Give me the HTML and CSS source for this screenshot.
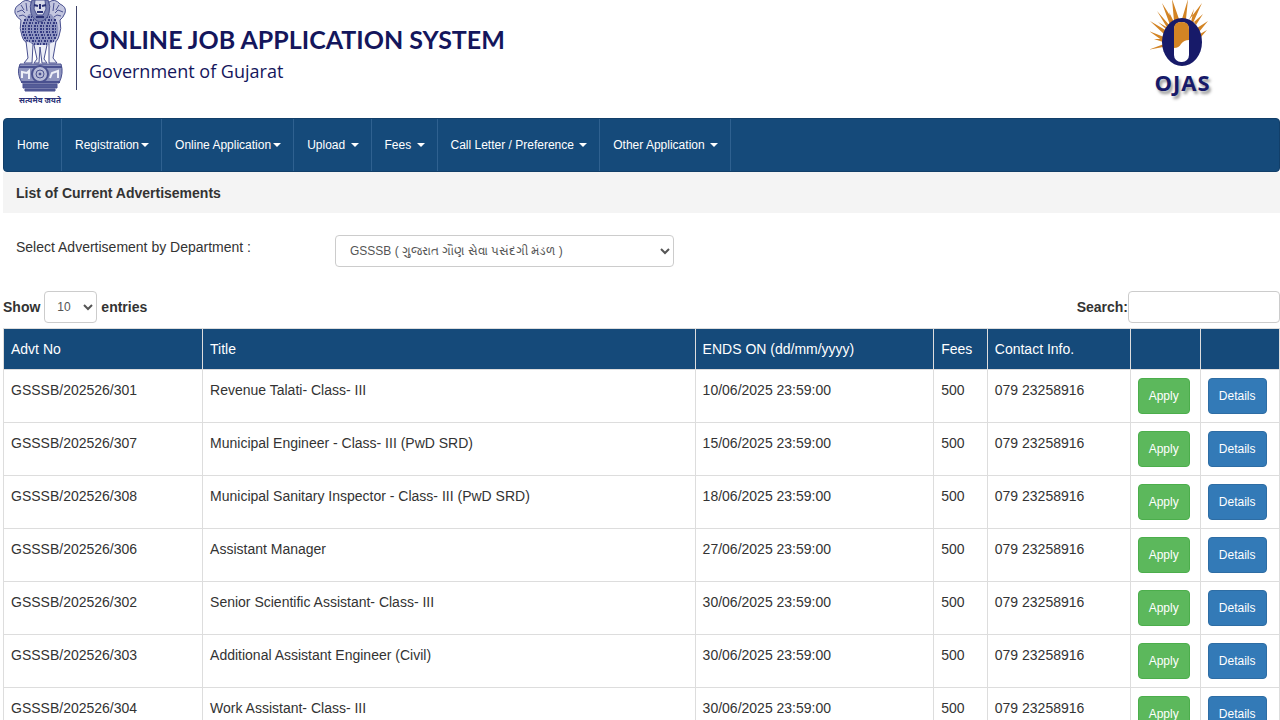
FILE: index.html
```html
<!DOCTYPE html>
<html lang="en">
<head>
    <meta charset="UTF-8">
    <meta name="viewport" content="width=device-width, initial-scale=1.0">
    <title>Online Job Application System</title>
    <link rel="stylesheet" href="styles.css">
</head>
<body>
    <header class="header">
        <div class="emblem">
            <svg width="52" height="94" viewBox="14 0 52 94" fill="none" stroke="#4a5190">
                <!-- side lions -->
                <path d="M31 2 Q25-2 20 4 Q14 7 15 13 Q17 18 21 20 Q19 29 22 36 Q24 43 29 43 L34 20Z" fill="#c3c6df"/>
                <path d="M49 2 Q55-2 60 4 Q67 7 65 13 Q63 18 60 20 Q62 29 59 36 Q57 43 52 43 L46 20Z" fill="#c3c6df"/>
                <path d="M17 12l5-2 3 3M19 16l4-1 3 2M21 5l3 5M26 3l1 8M63 12l-5-2-3 3M61 16l-4-1-3 2M59 5l-3 5M54 3l-1 8"/>
                <!-- manes -->
                <path d="M29 14 Q20 22 22 34 Q25 44 33 45 L40 48 L47 45 Q55 44 58 34 Q60 22 51 14Z" fill="#8f95c0" stroke="none"/>
                <path d="M28 17h24M24 20h32M23 23h34M22 26h36M22 29h36M22 32h36M23 35h34M24 38h32M26 41h28M31 44h18" stroke="#343b82" stroke-width="2" stroke-dasharray="2 1 1 2"/>
                <!-- centre lion -->
                <path d="M32 0 Q29 6 31 13 Q33 20 40 22 Q47 20 49 13 Q51 6 48 0Z" fill="#7b82b3"/>
                <path d="M35 0h10l1 9-3 6h-6l-3-6Z" fill="#d9dbea"/>
                <path d="M34 5l4 1M42 6l4-1M40 4v5M37 12h6M36 17h8" stroke="#2a3074" stroke-width="2"/>
                <!-- legs -->
                <path d="M26 41l2 17-4 5h8l1-19M34 45l3 14-3 4h5l1-16 2 16h5l-3-4 3-14M49 44v19h8l-4-5 3-17" fill="#eceef6"/>
                <!-- abacus and wheel -->
                <path d="M20 64h41q3 9-2 19H22q-6-10-2-19Z" fill="#8e94be"/>
                <path d="M19 67h43M21 82h39" stroke-width="2"/>
                <circle cx="40" cy="74" r="8" fill="#b8bcd8" stroke-width="2"/>
                <circle cx="40" cy="74" r="4"/>
                <circle cx="40" cy="74" r="1" fill="#2c3378"/>
                <path d="M22 78v-6l5 1 2-2v8M58 78v-7l-6 2-2 5" stroke="#eef0f7" stroke-width="2"/>
                <path d="M23 84h34v4H23Z M25 89h30v2H25Z" fill="#555d98"/>
            </svg>
            <span class="motto">सत्यमेव जयते</span>
        </div>
        <div class="brand">
            <h1>ONLINE JOB APPLICATION SYSTEM</h1>
            <p>Government of Gujarat</p>
        </div>
        <div class="ojas">
            <svg width="64" height="68" viewBox="1150 0 64 68">
                <path fill="#d38424" d="M1164 44 L1148 50 1163 47Z M1164 37 L1149 31 1163 41Z M1167 31 L1150 21 1165 35Z M1170 26 L1157 11 1168 29Z M1174 22 L1162 3 1170 25Z M1179 19 L1172 -1 1174 21Z M1186 19 L1188 -1 1182 19Z M1193 23 L1202 3 1189 20Z M1197 28 L1208 21 1199 32Z M1196 25 L1203 14 1194 22Z M1174 22 L1169 12 1172 24Z M1168 28 L1158 22 1167 30Z M1164 39 L1154 39 1163 42Z M1189 20 L1194 9 1191 22Z M1200 34 L1207 30 1201 37Z"/>
                <ellipse cx="1182" cy="42" rx="20" ry="24" fill="#171a69"/>
                <rect x="1174" y="22" width="15" height="40" rx="7" fill="#fff"/>
                <path d="M1174 48 V29 q0-7 7-7 h1 q7 0 7 7 V40 q-5 0-8 4 q-2 4-7 4Z" fill="#d38424"/>
            </svg>
            <span class="ojas-text"><span>O</span><span>J</span><span>A</span><span>S</span></span>
        </div>
    </header>

    <nav class="navbar">
        <a href="#">Home</a>
        <a href="#">Registration<span class="caret"></span></a>
        <a href="#">Online Application<span class="caret"></span></a>
        <a href="#">Upload <span class="caret"></span></a>
        <a href="#">Fees <span class="caret"></span></a>
        <a href="#">Call Letter / Preference <span class="caret"></span></a>
        <a href="#">Other Application <span class="caret"></span></a>
    </nav>

    <main>
        <h2 class="page-title">List of Current Advertisements</h2>

        <div class="filter">
            <label for="department">Select Advertisement by Department :</label>
            <select id="department" class="form-control">
                <option>GSSSB ( ગુજરાત ગૌણ સેવા પસંદગી મંડળ )</option>
            </select>
        </div>

        <div class="table-tools">
            <label class="length">Show
                <select class="form-control">
                    <option>10</option>
                    <option>25</option>
                    <option>50</option>
                </select>
                entries</label>
            <label class="search">Search:<input type="search" class="form-control"></label>
        </div>

        <table class="adverts">
            <thead>
                <tr>
                    <th class="col-no">Advt No</th>
                    <th class="col-title">Title</th>
                    <th class="col-ends">ENDS ON (dd/mm/yyyy)</th>
                    <th class="col-fees">Fees</th>
                    <th class="col-contact">Contact Info.</th>
                    <th class="col-apply"></th>
                    <th class="col-details"></th>
                </tr>
            </thead>
            <tbody>
                <tr>
                    <td>GSSSB/202526/301</td>
                    <td>Revenue Talati- Class- III</td>
                    <td>10/06/2025 23:59:00</td>
                    <td>500</td>
                    <td>079 23258916</td>
                    <td><button class="btn btn-apply">Apply</button></td>
                    <td><button class="btn btn-details">Details</button></td>
                </tr>
                <tr>
                    <td>GSSSB/202526/307</td>
                    <td>Municipal Engineer - Class- III (PwD SRD)</td>
                    <td>15/06/2025 23:59:00</td>
                    <td>500</td>
                    <td>079 23258916</td>
                    <td><button class="btn btn-apply">Apply</button></td>
                    <td><button class="btn btn-details">Details</button></td>
                </tr>
                <tr>
                    <td>GSSSB/202526/308</td>
                    <td>Municipal Sanitary Inspector - Class- III (PwD SRD)</td>
                    <td>18/06/2025 23:59:00</td>
                    <td>500</td>
                    <td>079 23258916</td>
                    <td><button class="btn btn-apply">Apply</button></td>
                    <td><button class="btn btn-details">Details</button></td>
                </tr>
                <tr>
                    <td>GSSSB/202526/306</td>
                    <td>Assistant Manager</td>
                    <td>27/06/2025 23:59:00</td>
                    <td>500</td>
                    <td>079 23258916</td>
                    <td><button class="btn btn-apply">Apply</button></td>
                    <td><button class="btn btn-details">Details</button></td>
                </tr>
                <tr>
                    <td>GSSSB/202526/302</td>
                    <td>Senior Scientific Assistant- Class- III</td>
                    <td>30/06/2025 23:59:00</td>
                    <td>500</td>
                    <td>079 23258916</td>
                    <td><button class="btn btn-apply">Apply</button></td>
                    <td><button class="btn btn-details">Details</button></td>
                </tr>
                <tr>
                    <td>GSSSB/202526/303</td>
                    <td>Additional Assistant Engineer (Civil)</td>
                    <td>30/06/2025 23:59:00</td>
                    <td>500</td>
                    <td>079 23258916</td>
                    <td><button class="btn btn-apply">Apply</button></td>
                    <td><button class="btn btn-details">Details</button></td>
                </tr>
                <tr>
                    <td>GSSSB/202526/304</td>
                    <td>Work Assistant- Class- III</td>
                    <td>30/06/2025 23:59:00</td>
                    <td>500</td>
                    <td>079 23258916</td>
                    <td><button class="btn btn-apply">Apply</button></td>
                    <td><button class="btn btn-details">Details</button></td>
                </tr>
            </tbody>
        </table>
    </main>
</body>
</html>
```
FILE: styles.css
```css
* {
    box-sizing: border-box;
}
body {
    margin: 0;
    padding-left: 3px;
    background-color: #fff;
    color: #333;
    font-family: "Liberation Sans", Arial, sans-serif;
    font-size: 14px;
    line-height: 24px;
}
h1, h2, p {
    margin: 0;
}

/* Header */
.header {
    display: flex;
    align-items: flex-start;
    height: 118px;
    padding: 0 66px 0 10px;
}
.emblem {
    display: flex;
    flex-direction: column;
    align-items: center;
    width: 54px;
    color: #2c3378;
}
.motto {
    font-family: "Noto Sans", sans-serif;
    font-size: 8px;
    font-weight: bold;
    line-height: 12px;
    white-space: nowrap;
}
.brand {
    margin: 6px auto 0 9px;
    padding: 16px 0 4px 12px;
    border-left: 1px solid #3d4268;
    color: #14165c;
}
.brand h1 {
    font-family: Lato, sans-serif;
    font-size: 25px;
    line-height: 34px;
}
.brand p {
    font-family: "Open Sans", sans-serif;
    font-size: 18px;
    line-height: 30px;
}
.ojas {
    display: flex;
    flex-direction: column;
    align-items: center;
}
.ojas-text {
    display: flex;
    gap: 1px;
    color: #171a69;
    font-family: "Open Sans", sans-serif;
    font-size: 22px;
    font-weight: bold;
    line-height: 28px;
    text-shadow: 2px 3px 3px #999;
}

/* Navigation */
.navbar {
    display: flex;
    height: 54px;
    background-color: #154a7a;
    border: 1px solid #123f69;
    border-radius: 4px;
}
.navbar a {
    display: flex;
    align-items: center;
    padding: 0 12px 0 13px;
    border-right: 1px solid #2f6190;
    color: #fff;
    font-size: 12px;
    text-decoration: none;
    white-space: pre;
}
.caret {
    margin-left: 2px;
    border-top: 4px solid #fff;
    border-left: 4px solid transparent;
    border-right: 4px solid transparent;
}

/* Filters */
.page-title {
    padding: 9px 13px 8px;
    background-color: #f4f4f4;
    font-size: 14px;
    line-height: 24px;
}
.form-control {
    height: 32px;
    border: 1px solid #ccc;
    border-radius: 4px;
    background-color: #fff;
    color: #555;
    font-family: inherit;
    font-size: 12px;
}
.filter {
    display: grid;
    grid-template-columns: 26% 339px;
    padding-top: 22px;
}
.filter label {
    padding-left: 13px;
}
.filter .form-control {
    padding: 0 10px;
}
.table-tools {
    display: flex;
    justify-content: space-between;
    padding: 24px 0 5px;
    font-weight: bold;
}
.length,
.search {
    display: flex;
    align-items: center;
}
.length {
    gap: 4px;
}
.length .form-control {
    width: 53px;
    padding: 0 8px;
}
.search .form-control {
    width: 152px;
}

/* Table */
.adverts {
    width: 100%;
    border-collapse: collapse;
    table-layout: fixed;
}
.adverts th,
.adverts td {
    padding: 8px 7px;
    border: 1px solid #ddd;
    text-align: left;
    vertical-align: top;
}
.adverts th {
    background-color: #154a7a;
    color: #fff;
    font-weight: normal;
}
.col-no { width: 15.6%; }
.col-title { width: 38.6%; }
.col-ends { width: 18.7%; }
.col-fees { width: 4.2%; }
.col-contact { width: 11.2%; }
.col-apply { width: 5.5%; }
.col-details { width: 6.2%; }
.btn {
    display: block;
    height: 36px;
    padding: 0 10px;
    border: 1px solid;
    border-radius: 4px;
    color: #fff;
    font-family: inherit;
    font-size: 12px;
    cursor: pointer;
}
.btn-apply {
    background-color: #5cb85c;
    border-color: #4cae4c;
}
.btn-details {
    background-color: #337ab7;
    border-color: #2e6da4;
}
```
